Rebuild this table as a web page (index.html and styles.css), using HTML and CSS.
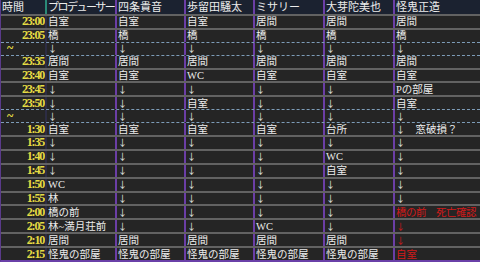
FILE: index.html
```html
<!DOCTYPE html>
<html lang="ja">
<head>
<meta charset="utf-8">
<link rel="stylesheet" href="styles.css">
</head>
<body>
<div class="sheet">
  <div class="row head">
    <div class="c t">時間</div><div class="c first tight">プロデューサー</div><div class="c">四条貴音</div><div class="c">歩留田騒太</div><div class="c">ミサリー</div><div class="c">大芽陀美也</div><div class="c">怪鬼正造</div>
  </div>
  <div class="row">
    <div class="c t">23:00</div><div class="c first">自室</div><div class="c">自室</div><div class="c">自室</div><div class="c">居間</div><div class="c">居間</div><div class="c">居間</div>
  </div>
  <div class="row">
    <div class="c t">23:05</div><div class="c first">橋</div><div class="c">橋</div><div class="c">橋</div><div class="c">橋</div><div class="c">橋</div><div class="c">橋</div>
  </div>
  <div class="row gap">
    <div class="c t tilde">~</div><div class="c first"><span class="ar">↓</span></div><div class="c"><span class="ar">↓</span></div><div class="c"><span class="ar">↓</span></div><div class="c"><span class="ar">↓</span></div><div class="c"><span class="ar">↓</span></div><div class="c"><span class="ar">↓</span></div>
  </div>
  <div class="row after-gap">
    <div class="c t">23:35</div><div class="c first">居間</div><div class="c">居間</div><div class="c">居間</div><div class="c">居間</div><div class="c">居間</div><div class="c">居間</div>
  </div>
  <div class="row">
    <div class="c t">23:40</div><div class="c first">自室</div><div class="c">自室</div><div class="c">WC</div><div class="c">自室</div><div class="c">自室</div><div class="c">自室</div>
  </div>
  <div class="row">
    <div class="c t">23:45</div><div class="c first"><span class="ar">↓</span></div><div class="c"><span class="ar">↓</span></div><div class="c"><span class="ar">↓</span></div><div class="c"><span class="ar">↓</span></div><div class="c"><span class="ar">↓</span></div><div class="c">Pの部屋</div>
  </div>
  <div class="row">
    <div class="c t">23:50</div><div class="c first"><span class="ar">↓</span></div><div class="c"><span class="ar">↓</span></div><div class="c">自室</div><div class="c"><span class="ar">↓</span></div><div class="c"><span class="ar">↓</span></div><div class="c">自室</div>
  </div>
  <div class="row gap">
    <div class="c t tilde">~</div><div class="c first"><span class="ar">↓</span></div><div class="c"><span class="ar">↓</span></div><div class="c"><span class="ar">↓</span></div><div class="c"><span class="ar">↓</span></div><div class="c"><span class="ar">↓</span></div><div class="c"><span class="ar">↓</span></div>
  </div>
  <div class="row after-gap">
    <div class="c t">1:30</div><div class="c first">自室</div><div class="c">自室</div><div class="c">自室</div><div class="c">自室</div><div class="c">台所</div><div class="c"><span class="ar">↓</span>　窓破損？</div>
  </div>
  <div class="row">
    <div class="c t">1:35</div><div class="c first"><span class="ar">↓</span></div><div class="c"><span class="ar">↓</span></div><div class="c"><span class="ar">↓</span></div><div class="c"><span class="ar">↓</span></div><div class="c"><span class="ar">↓</span></div><div class="c"><span class="ar">↓</span></div>
  </div>
  <div class="row">
    <div class="c t">1:40</div><div class="c first"><span class="ar">↓</span></div><div class="c"><span class="ar">↓</span></div><div class="c"><span class="ar">↓</span></div><div class="c"><span class="ar">↓</span></div><div class="c">WC</div><div class="c"><span class="ar">↓</span></div>
  </div>
  <div class="row">
    <div class="c t">1:45</div><div class="c first"><span class="ar">↓</span></div><div class="c"><span class="ar">↓</span></div><div class="c"><span class="ar">↓</span></div><div class="c"><span class="ar">↓</span></div><div class="c">自室</div><div class="c"><span class="ar">↓</span></div>
  </div>
  <div class="row">
    <div class="c t">1:50</div><div class="c first">WC</div><div class="c"><span class="ar">↓</span></div><div class="c"><span class="ar">↓</span></div><div class="c"><span class="ar">↓</span></div><div class="c"><span class="ar">↓</span></div><div class="c"><span class="ar">↓</span></div>
  </div>
  <div class="row">
    <div class="c t">1:55</div><div class="c first">林</div><div class="c"><span class="ar">↓</span></div><div class="c"><span class="ar">↓</span></div><div class="c"><span class="ar">↓</span></div><div class="c"><span class="ar">↓</span></div><div class="c"><span class="ar">↓</span></div>
  </div>
  <div class="row">
    <div class="c t">2:00</div><div class="c first">橋の前</div><div class="c"><span class="ar">↓</span></div><div class="c"><span class="ar">↓</span></div><div class="c"><span class="ar">↓</span></div><div class="c"><span class="ar">↓</span></div><div class="c red fit">橋の前　死亡確認</div>
  </div>
  <div class="row">
    <div class="c t">2:05</div><div class="c first">林~満月荘前</div><div class="c"><span class="ar">↓</span></div><div class="c"><span class="ar">↓</span></div><div class="c">WC</div><div class="c"><span class="ar">↓</span></div><div class="c red"><span class="ar">↓</span></div>
  </div>
  <div class="row">
    <div class="c t">2:10</div><div class="c first">居間</div><div class="c">居間</div><div class="c">居間</div><div class="c">居間</div><div class="c">居間</div><div class="c red"><span class="ar">↓</span></div>
  </div>
  <div class="row">
    <div class="c t">2:15</div><div class="c first">怪鬼の部屋</div><div class="c">怪鬼の部屋</div><div class="c">怪鬼の部屋</div><div class="c">怪鬼の部屋</div><div class="c">怪鬼の部屋</div><div class="c red">自室</div>
  </div>
</div>
</body>
</html>
```

FILE: styles.css
```css
html, body {
  margin: 0;
  padding: 0;
  background: #232323;
}
.sheet {
  width: 480px;
  height: 262px;
  display: flex;
  flex-direction: column;
  box-sizing: border-box;
  border-left: 1px solid #5a3a8a;
  border-bottom: 2px solid #6a40a8;
  font-family: "Liberation Serif", "Noto Sans CJK JP", serif;
  font-size: 10.5px;
  color: #ececec;
  overflow: hidden;
}
.row {
  flex: 1 1 0;
  min-height: 0;
  display: grid;
  grid-template-columns: 44px 70px 69px 69px 70px 70px 87px;
  background: #252525;
  border-top: 2px solid #626262;
  box-sizing: border-box;
}
.row.head {
  flex: 0 0 14px;
  background: #1b2230;
  border-top: none;
  font-size: 11px;
}
.row.gap,
.row.after-gap {
  border-top: 1px dashed #7d9cb8;
}
.c {
  border-left: 2px solid #6b3ea6;
  padding-left: 1px;
  display: flex;
  align-items: center;
  white-space: nowrap;
  line-height: 11px;
  min-width: 0;
}
.ar {
  font-family: "Noto Sans CJK JP", sans-serif;
  font-size: 9px;
  line-height: 9px;
}
.c.t {
  border-left: none;
  justify-content: flex-end;
  color: #e6dc44;
  padding: 0;
  font-size: 12px;
  font-weight: bold;
  letter-spacing: -1.2px;
  padding-right: 1px;
}
.head .c.t {
  justify-content: flex-start;
  color: #ececec;
  font-size: 11px;
  font-weight: normal;
  letter-spacing: 0;
  padding-left: 1px;
}
.c.first {
  border-left-color: #2c2c44;
}
.head .c.first {
  border-left-color: #2a8a78;
}
.c.tight {
  letter-spacing: -1.5px;
}
.c.tilde {
  justify-content: flex-start;
  padding-left: 6px;
}
.c.red {
  color: #d01a1a;
}
.c.fit {
  letter-spacing: -0.5px;
}
```
